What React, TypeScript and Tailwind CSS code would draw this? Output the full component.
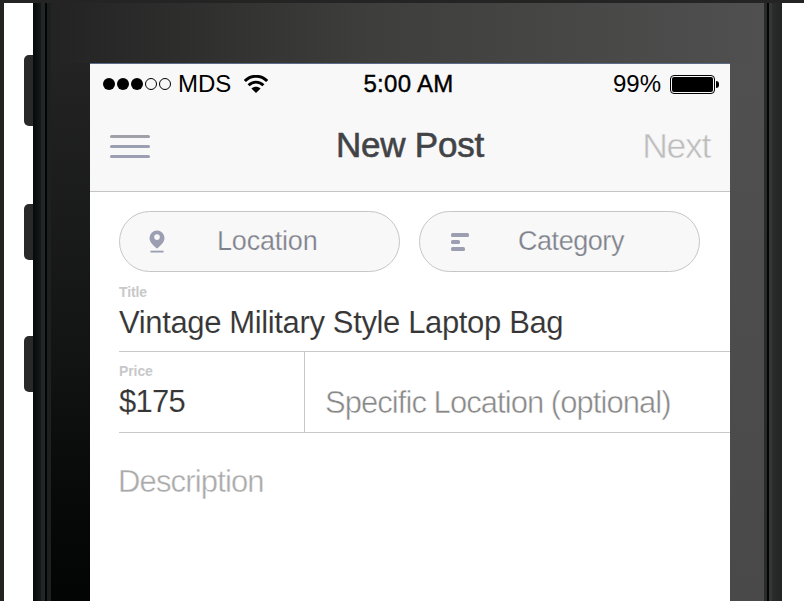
import type { ReactNode } from "react";

function SignalDots() {
  return (
    <div className="flex gap-[2px]">
      {[true, true, true, false, false].map((full, i) => (
        <span
          key={i}
          className={
            full
              ? "size-3 rounded-full bg-black"
              : "size-3 rounded-full border border-black"
          }
        />
      ))}
    </div>
  );
}

function WifiIcon() {
  return (
    <svg width="24" height="18" viewBox="0 0 24 18" fill="none" stroke="#000">
      <path d="M0.9 6C7 -0.3 17 -0.3 23.1 6" strokeWidth="2.9" />
      <path d="M4.6 10.3C8.8 6.1 15.2 6.1 19.4 10.3" strokeWidth="2.9" />
      <path d="M7.4 13.6C10 11 14 11 16.6 13.6L12 18Z" fill="#000" stroke="none" />
    </svg>
  );
}

function BatteryIcon() {
  return (
    <div className="flex items-center">
      <div className="h-[19px] w-[45px] rounded-[4px] border border-black p-px">
        <div className="size-full rounded-[2px] bg-black" />
      </div>
      <div className="ml-px h-[7px] w-[3px] rounded-r-full bg-black" />
    </div>
  );
}

function PinIcon() {
  return (
    <svg width="16" height="24" viewBox="0 0 16 24" fill="#9b9fb1">
      <path
        fillRule="evenodd"
        d="M8 0.5A7.5 7.5 0 0 0 0.5 8C0.5 12.2 4.4 15.6 8 18.6C11.6 15.6 15.5 12.2 15.5 8A7.5 7.5 0 0 0 8 0.5ZM8 4.3A2.8 2.8 0 1 1 8 9.9A2.8 2.8 0 0 1 8 4.3Z"
      />
      <path d="M1.5 20.7H14.5V22.5H1.5Z" />
    </svg>
  );
}

function ListIcon() {
  return (
    <div className="flex w-[18px] flex-col gap-[3px]">
      <span className="h-1 w-[18px] rounded-[1.5px] bg-[#9b9fb1]" />
      <span className="h-1 w-[9px] rounded-[1.5px] bg-[#9b9fb1]" />
      <span className="h-1 w-[14px] rounded-[1.5px] bg-[#9b9fb1]" />
    </div>
  );
}

function Pill({ icon, children }: { icon: ReactNode; children: ReactNode }) {
  return (
    <button className="flex h-[61px] w-[281px] items-center rounded-full border border-[#c6c6c6] bg-[#f8f8f8] pl-[29px] text-[27px] leading-none text-[#7f828c] [-webkit-text-stroke:0.25px_#f8f8f8]">
      {icon}
      {children}
    </button>
  );
}

function StatusBar() {
  return (
    <div className="grid h-[42px] grid-cols-3 items-center text-[24px] leading-none text-black">
      <div className="flex items-center pl-[13px]">
        <SignalDots />
        <span className="ml-[7px]">MDS</span>
        <span className="ml-[13px]">
          <WifiIcon />
        </span>
      </div>
      <div className="pr-[3px] text-center tracking-[0.3px] [-webkit-text-stroke:0.4px_#000]">5:00 AM</div>
      <div className="flex items-center justify-end pr-[11px]">
        <span className="mr-[9px]">99%</span>
        <BatteryIcon />
      </div>
    </div>
  );
}

function NavBar() {
  return (
    <div className="grid h-[82px] grid-cols-3 items-center leading-none">
      <div className="flex flex-col gap-[7px] pl-5">
        <span className="h-[3px] w-10 rounded-full bg-[#a0a1a8]" />
        <span className="h-[3px] w-10 rounded-full bg-[#9b9fb1]" />
        <span className="h-[3px] w-10 rounded-full bg-[#9b9fb1]" />
      </div>
      <h1 className="pb-[3px] text-center text-[35px] tracking-[-0.25px] text-[#414347] [-webkit-text-stroke:0.6px_#414347]">
        New Post
      </h1>
      <div className="pt-[2px] pr-[20px] text-right text-[35.5px] tracking-[-1.3px] text-[#bdbdbd] [-webkit-text-stroke:0.5px_#f8f8f8]">
        Next
      </div>
    </div>
  );
}

function SideButton({ className }: { className: string }) {
  return <div className={`absolute left-[24px] w-[12px] rounded-l-[5px] bg-[#292929] ${className}`} />;
}

export default function App() {
  return (
    <div className="relative flex h-[601px] w-[804px] flex-col overflow-hidden bg-white font-['Liberation_Sans',Arial,sans-serif]">
      <div className="h-[3px] shrink-0 bg-[#242424]" />
      <div className="flex min-h-0 flex-1">
        <div className="w-1 bg-[#242321]" />
        <SideButton className="top-[55px] h-[71px]" />
        <SideButton className="top-[204px] h-[56px]" />
        <SideButton className="top-[336px] h-[56px]" />
        <div className="relative ml-[29px] flex w-[749px]">
          <div className="flex">
            <div className="w-2 bg-linear-to-r from-[#080a0a] to-[#151919]" />
            <div className="w-1 bg-[#222625]" />
            <div className="w-[2px] bg-[#030404]" />
            <div className="w-1 bg-[#1c2120]" />
          </div>
          <div className="flex w-[713px] flex-col">
            <div className="h-[60px] shrink-0 bg-linear-to-r from-[#222322] via-[#3e3e3d] via-45% to-[#4f504f]" />
            <div className="flex min-h-0 flex-1">
              <div className="w-[39px] bg-linear-to-b from-[#222322] via-[#121313] via-55% to-[#030404]" />
              <main className="w-[640px] overflow-hidden bg-white">
                <header className="border-b border-[#c4c4c4] bg-[#f8f8f8] shadow-[inset_0_1px_0_#5c6b8a]">
                  <StatusBar />
                  <NavBar />
                  <div className="h-1" />
                </header>
                <div className="flex gap-[19px] pt-[19px] pl-[29px]">
                  <Pill icon={<PinIcon />}>
                    <span className="ml-[52px] tracking-[-0.2px]">Location</span>
                  </Pill>
                  <Pill icon={<span className="ml-[2px]"><ListIcon /></span>}>
                    <span className="ml-[49px] tracking-[-0.45px]">Category</span>
                  </Pill>
                </div>
                <section className="ml-[29px] h-[80px] border-b border-[#c8c8c8] pt-[13px]">
                  <div className="text-[14px] leading-[15px] font-bold tracking-[-0.1px] text-[#c8c8ca]">Title</div>
                  <div className="mt-[6px] text-[31px] leading-[34px] tracking-[-0.36px] text-[#363636] [-webkit-text-stroke:0.1px_#fff]">
                    Vintage Military Style Laptop Bag
                  </div>
                </section>
                <section className="ml-[29px] flex h-[81px] border-b border-[#c8c8c8]">
                  <div className="w-[186px] border-r border-[#c8c8c8] pt-[12px]">
                    <div className="text-[14px] leading-[15px] font-bold tracking-[-0.1px] text-[#c8c8ca]">Price</div>
                    <div className="mt-[6px] text-[31px] leading-[34px] tracking-[-0.7px] text-[#363636] [-webkit-text-stroke:0.1px_#fff]">
                      $175
                    </div>
                  </div>
                  <div className="pt-[34px] pl-[20px] text-[31px] leading-[34px] tracking-[-0.95px] whitespace-nowrap text-[#888] [-webkit-text-stroke:0.5px_#fff]">
                    Specific Location (optional)
                  </div>
                </section>
                <div className="mt-[32px] ml-[28px] text-[31px] leading-[34px] tracking-[-0.85px] text-[#aaa] [-webkit-text-stroke:0.4px_#fff]">
                  Description
                </div>
              </main>
              <div className="w-[34px] bg-linear-to-b from-[#4f504f] to-[#484948]" />
            </div>
          </div>
          <div className="flex">
            <div className="w-[3px] bg-[#292b2a]" />
            <div className="w-[2px] bg-[#030404]" />
            <div className="w-[3px] bg-[#343736]" />
            <div className="w-[10px] bg-linear-to-r from-[#2a2d2c] to-[#202423]" />
          </div>
        </div>
      </div>
    </div>
  );
}
